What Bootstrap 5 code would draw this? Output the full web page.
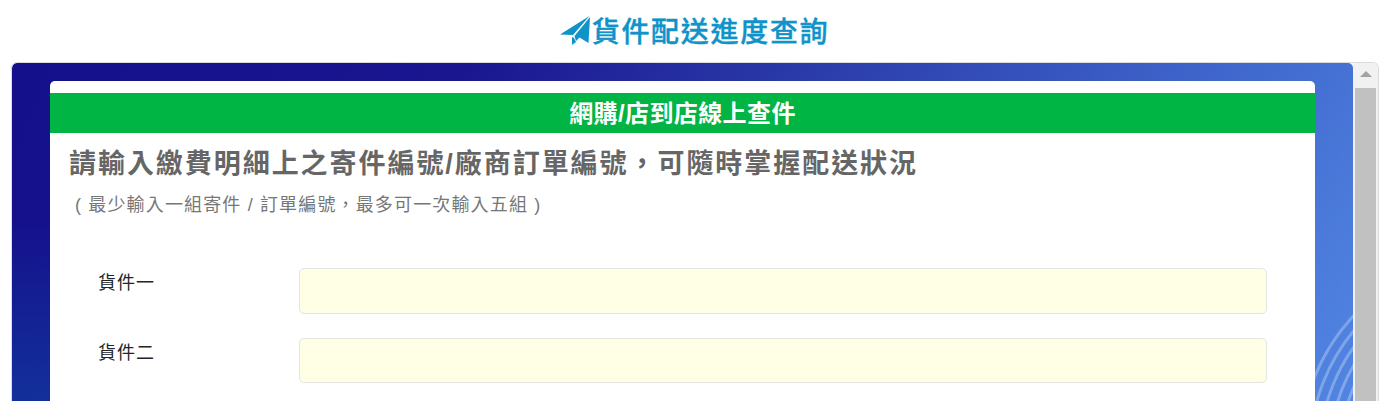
<!DOCTYPE html>
<html lang="zh-Hant">
<head>
<meta charset="utf-8">
<title>貨件配送進度查詢</title>
<link href="https://cdn.jsdelivr.net/npm/bootstrap@5.3.0/dist/css/bootstrap.min.css" rel="stylesheet">
<style>
html,body{height:401px;overflow:hidden;background:#fff;}
body{font-family:"Liberation Sans","Noto Sans CJK TC",sans-serif;color:#212529;}
.page-title{height:62px;color:#0f93c9;font-size:28px;font-weight:500;letter-spacing:1.7px;line-height:1;padding-top:4px;-webkit-text-stroke:.4px #0f93c9;}
.title-icon{width:32px;height:30px;margin-top:-4px;flex:none;}
.shell{margin:0 10px 0 11px;height:420px;border:1px solid #dcdcdc;border-bottom:0;border-radius:6px 6px 0 0;overflow:hidden;}
.bg-pane{flex:1 1 auto;min-width:0;position:relative;padding:18px 38px 0 38px;border-radius:5px 5px 0 0;
 background:
  linear-gradient(180deg,rgba(18,48,154,0) 160px,#12309a 340px) 0 0/38px 100% no-repeat,
  linear-gradient(158deg,rgba(20,16,140,0) 58%,rgba(90,145,235,.4) 100%),
  linear-gradient(112deg,#14108c 0%,#1a1690 30%,#2a3aa8 52%,#3f66cc 80%,#4f82e0 100%);}
.arcs{position:absolute;left:0;top:0;width:100%;height:100%;}
.sheet{position:relative;background:#fff;height:420px;padding-top:12px;border-radius:5px 5px 0 0;}
.green-bar{background:#00b544;color:#fff;height:40px;font-size:24px;font-weight:700;line-height:42px;letter-spacing:.4px;}
.lead-text{color:#666;font-size:27px;font-weight:700;letter-spacing:1.95px;line-height:32px;margin:15px 0 0 19px;}
.sub-text{color:#777;font-size:18px;letter-spacing:1.15px;line-height:24px;margin:13px 0 0 25px;}
.form-area{margin-top:51px;padding:0 48px 0 48px;}
.field-row{height:46px;margin-bottom:24px;}
.field-row.second{height:45px;}
.field-label{width:201px;flex:none;font-size:18px;letter-spacing:1px;line-height:1;padding-top:6px;color:#212529;}
.field-input.form-control{background:#ffffe6;border:1px solid #e4e4e0;height:100%;border-radius:5px;}
.fake-scroll{width:25px;flex:none;background:#f1f1f1;}
.scroll-btn{height:25px;padding-top:8px;}
.scroll-arrow{width:0;height:0;border-left:6px solid transparent;border-right:6px solid transparent;border-bottom:6px solid #a3a3a3;}
.scroll-thumb{flex:1;background:#c1c1c1;margin:0 2px;}
</style>
</head>
<body>
<header class="page-title d-flex justify-content-center align-items-center">
  <svg class="title-icon" viewBox="0 0 32 30" aria-hidden="true">
    <path fill="#0f93c9" d="M0 18.500 29.500 0 13 19Z"/>
    <path fill="#0f93c9" d="M30 1 28.500 27 19.500 21.500 16 25 14.500 20Z"/>
    <path fill="#0f93c9" d="M12 21 14 22 16 26 12 29Z"/>
  </svg>
  <span>貨件配送進度查詢</span>
</header>
<div class="shell d-flex">
  <div class="bg-pane">
    <svg class="arcs" viewBox="0 0 1341 420" preserveAspectRatio="xMaxYMin slice" aria-hidden="true">
      <g fill="none" stroke="#fff" stroke-opacity=".28" stroke-width="3">
        <circle cx="1488" cy="389" r="200"/>
        <circle cx="1488" cy="389" r="190"/>
        <circle cx="1488" cy="389" r="180"/>
        <circle cx="1488" cy="389" r="170"/>
        <circle cx="1488" cy="389" r="160"/>
      </g>
    </svg>
    <main class="sheet">
      <div class="green-bar text-center">網購/店到店線上查件</div>
      <h1 class="lead-text">請輸入繳費明細上之寄件編號/廠商訂單編號，可隨時掌握配送狀況</h1>
      <p class="sub-text">( 最少輸入一組寄件 / 訂單編號，最多可一次輸入五組 )</p>
      <form class="form-area">
        <div class="field-row d-flex">
          <label class="field-label" for="f1">貨件一</label>
          <input id="f1" class="form-control field-input" type="text">
        </div>
        <div class="field-row second d-flex">
          <label class="field-label" for="f2">貨件二</label>
          <input id="f2" class="form-control field-input" type="text">
        </div>
      </form>
    </main>
  </div>
  <div class="fake-scroll d-flex flex-column">
    <div class="scroll-btn d-flex justify-content-center"><div class="scroll-arrow"></div></div>
    <div class="scroll-thumb"></div>
  </div>
</div>
<script src="https://cdn.jsdelivr.net/npm/bootstrap@5.3.0/dist/js/bootstrap.bundle.min.js"></script>
</body>
</html>
